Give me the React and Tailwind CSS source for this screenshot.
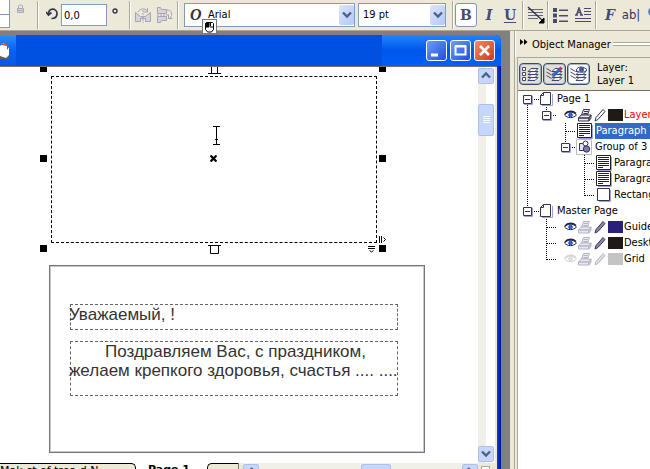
import React from "react";

const ui = "font-['DejaVu_Sans_Condensed','DejaVu_Sans',sans-serif] text-[11px] leading-4";

function Chevron({ dir = "down", className = "" }) {
  const d = { down: "M3 4.5l4 4 4-4", up: "M3 8.5l4-4 4 4", left: "M8.5 3l-4 4 4 4", right: "M5 3l4 4-4 4" }[dir];
  return (
    <svg viewBox="0 0 14 14" className={`h-[14px] w-[14px] ${className}`} fill="none" stroke="#4d6185" strokeWidth="2.4">
      <path d={d} />
    </svg>
  );
}

function Separator({ className = "" }) {
  return <div className={`h-7 w-[2px] shrink-0 border-l border-[#aca899] bg-white ${className}`} />;
}

function Dropdown({ label, value, className = "", textClass = "" }) {
  return (
    <div className={`relative h-6 shrink-0 ${className}`}>
      <select
        aria-label={label}
        defaultValue={value}
        className={`h-full w-full appearance-none border border-[#7f9db9] bg-white text-black outline-none ${textClass}`}
      >
        <option>{value}</option>
      </select>
      <span className="pointer-events-none absolute inset-y-[2px] right-px flex w-[15px] items-center justify-center rounded-[2px] bg-linear-to-br from-[#dbe5fd] to-[#b4c8f6]">
        <Chevron />
      </span>
    </div>
  );
}

function ToolButton({ label, className = "", children }) {
  return (
    <button aria-label={label} className={`flex h-6 shrink-0 items-center justify-center ${className}`}>
      {children}
    </button>
  );
}

const glyph = "font-['DejaVu_Serif',serif] text-[14px] font-bold text-[#4a4a78]";

function Toolbar() {
  return (
    <div className={`relative z-10 flex h-[31px] shrink-0 items-center border-b border-[#aca899] bg-[#ece9d8] ${ui}`}>
      <div className="-mt-[3px] flex w-[10px] shrink-0 flex-col">
        <input aria-label="Scale X" className="h-4 w-full border border-t-0 border-l-0 border-[#7f9db9] bg-white" />
        <input aria-label="Scale Y" className="h-[13px] w-full border border-t-0 border-l-0 border-[#7f9db9] bg-white" />
      </div>
      <ToolButton label="Lock ratio" className="ml-[6px] w-[9px] pb-3">
        <svg viewBox="0 0 9 10" className="h-[10px] w-[9px]" fill="none" stroke="#aaa9b8">
          <path d="M2.500 4V2l1-1h2l1 1v2" />
          <path d="M1.500 4.500h6v4h-6zM2 6.500h5" fill="#d4d3dc" />
        </svg>
      </ToolButton>
      <Separator className="ml-3" />
      <ToolButton label="Rotate" className="ml-[7px] w-3 pb-1">
        <svg viewBox="0 0 12 13" className="h-[13px] w-3" fill="none" stroke="#34344c" strokeWidth="1.7">
          <path d="M2.500 7.500C2 0 11 1 11 6.500c0 3-2 5-5.500 5" />
          <path d="M0 5l2.500 3L5.500 5.500" />
        </svg>
      </ToolButton>
      <input aria-label="Angle" defaultValue="0,0" className="ml-[3px] h-[22px] w-[46px] shrink-0 border border-[#7f9db9] bg-white px-[2px]" />
      <svg viewBox="0 0 6 6" className="mb-2 ml-[5px] h-[6px] w-[6px] shrink-0" fill="none" stroke="#34344c" strokeWidth="1.4">
        <circle cx="3" cy="3" r="2" />
      </svg>
      <Separator className="ml-[11px]" />
      <ToolButton label="Mirror horizontally" className="ml-1 w-4">
        <svg viewBox="0 0 16 16" className="h-4 w-4" fill="#d5d4dc" stroke="#a5a4b4">
          <path d="M.5 5.500v9h5v-3h2v-2h-2zM15.500 5.500v9h-5v-3h-2v-2h2z" />
          <path d="M8 3v13" strokeDasharray="2 1" />
          <path d="M3 5C5 1 10 1 12 4M12.500 1v4h-4" fill="none" />
        </svg>
      </ToolButton>
      <ToolButton label="Mirror vertically" className="ml-[6px] w-4">
        <svg viewBox="0 0 16 16" className="h-4 w-4" fill="#d5d4dc" stroke="#a5a4b4">
          <path d="M.5.500h3l1 2h5v4h-9zM.5 15.500h3l1-2h5v-4h-9z" />
          <path d="M0 8h12" strokeDasharray="2 1" />
          <path d="M10 3c5 0 6 5 3 8M15.500 11.500h-4v-4" fill="none" />
        </svg>
      </ToolButton>
      <Separator className="ml-1" />
      <div className="relative ml-[5px] shrink-0">
        <Dropdown label="Font" value="Arial" className="w-[171px]" textClass="pl-[23px]" />
        <span className="pointer-events-none absolute top-[3px] left-[6px] font-['Liberation_Serif',serif] text-[16px] leading-[18px] font-bold text-[#333] italic">O</span>
        <span className="absolute top-4 left-[18px] flex h-[15px] w-[15px] items-center justify-center border border-[#777] bg-white">
          <svg viewBox="0 0 11 12" className="h-3 w-[11px]" fill="none" stroke="#000">
            <path d="M1.500 2.500l1-1h6l1 1v6l-2 2.500h-4l-2-2.500z" />
            <path d="M2 2h3v4H2z" fill="#000" />
            <path d="M6 6h3M6.500 2v3" />
          </svg>
        </span>
      </div>
      <Dropdown label="Font size" value="19 pt" className="ml-[3px] w-[88px]" textClass="pl-1" />
      <Separator className="ml-[6px]" />
      <ToolButton label="Bold" className={`ml-px w-[22px] rounded-[3px] border border-[#8096b5] bg-white ${glyph}`}>
        B
      </ToolButton>
      <ToolButton label="Italic" className={`ml-[6px] w-3 italic ${glyph}`}>
        I
      </ToolButton>
      <ToolButton label="Underline" className={`ml-2 w-[14px] underline underline-offset-2 ${glyph}`}>
        U
      </ToolButton>
      <Separator className="ml-[5px]" />
      <ToolButton label="Alignment" className="ml-[3px] w-[18px]">
        <svg viewBox="0 0 18 18" className="h-[18px] w-[18px]" fill="none" stroke="#66667c">
          <path d="M1 3.500h15M1 6.500h15M1 9.500h15M1 12.500h10" />
          <path d="M1 1l14 13" stroke="#34344c" strokeWidth="1.500" />
          <path d="M17 12v5h-5z" fill="#000" stroke="#000" />
        </svg>
      </ToolButton>
      <Separator className="ml-[2px]" />
      <ToolButton label="Bullets" className="ml-1 w-4">
        <svg viewBox="0 0 16 15" className="h-[15px] w-4" fill="#4a4a70">
          <path d="M0 0h4v4H0zM0 5.500h4v4H0zM0 11h4v4H0zM6 1.500h9V3H6zM6 7h9v1.500H6zM6 12.500h9V14H6z" />
        </svg>
      </ToolButton>
      <ToolButton label="Drop cap" className="ml-[6px] w-4">
        <svg viewBox="0 0 16 16" className="h-4 w-4" fill="none" stroke="#4a4a70">
          <path d="M9 1.500h7M9 4.500h7M9 7.500h7M0 11.500h16M0 14.500h16" />
          <path d="M0 8h3M5 8h3M1.500 8L4 1l2.500 7M2.500 5.500h3" strokeWidth="1.500" />
        </svg>
      </ToolButton>
      <Separator className="ml-1" />
      <ToolButton label="Format text" className={`ml-[6px] w-[14px] italic ${glyph}`}>
        F
      </ToolButton>
      <ToolButton label="Edit text" className="ml-[6px] w-4 text-[13px] text-[#34345c]">
        ab|
      </ToolButton>
      <ToolButton label="Convert text" className="ml-[9px] w-4">
        <svg viewBox="0 0 16 16" className="h-4 w-4" fill="none" stroke="#5080c8" strokeWidth="1.800">
          <path d="M6 1C2 1 1 3 1 5s2 4 5 4" />
        </svg>
      </ToolButton>
    </div>
  );
}

function WindowButton({ label, className, children }) {
  return (
    <button aria-label={label} className={`flex h-[21px] w-[21px] items-center justify-center rounded-[3px] border border-white ${className}`}>
      <svg viewBox="0 0 19 19" className="h-[19px] w-[19px]" fill="none" stroke="#fff">
        {children}
      </svg>
    </button>
  );
}

function TitleBar() {
  return (
    <div className="flex h-[31px] shrink-0 items-stretch rounded-tr-[6px] bg-[#0050e2]">
      <div className="flex w-4 items-center bg-linear-to-b from-[#2c8cff] via-[#0a62f0] to-[#0758e6]">
        <svg viewBox="0 0 12 18" className="h-[18px] w-3">
          <path d="M0 3h4l5 3v11H0z" fill="#55606a" />
          <path d="M0 4l3-3 4 2v5l2-3v8l-3 3-6-2z" fill="#fff" />
          <path d="M1 1l6 1v2L1 3z" fill="#c65a34" />
        </svg>
      </div>
      <div className="flex-1" />
      <div className="flex w-[119px] items-center justify-end gap-[3px] rounded-tr-[6px] bg-linear-to-b from-[#2484ff] via-[#0056ea] to-[#0060fa] pr-[6px]">
        <WindowButton label="Minimize" className="bg-linear-to-br from-[#6f9bf5] to-[#1c51d8]">
          <path d="M4 14h7" strokeWidth="3" />
        </WindowButton>
        <WindowButton label="Maximize" className="bg-linear-to-br from-[#6f9bf5] to-[#1c51d8]">
          <path d="M4.500 5.500h10v8h-10zM4 5h11" strokeWidth="2" />
        </WindowButton>
        <WindowButton label="Close" className="bg-linear-to-br from-[#ee8a66] to-[#cb3a12]">
          <path d="M5 5l9 9M14 5l-9 9" strokeWidth="2.600" />
        </WindowButton>
      </div>
    </div>
  );
}

function Handle({ className }) {
  return <span className={`absolute h-[7px] w-[7px] bg-black ${className}`} />;
}

/* Paragraph frame with its selection handles, text flow tabs and resize grips. */
function SelectedFrame() {
  return (
    <div className="absolute top-[9px] left-[51px] h-[167px] w-[326px] border border-dashed border-black">
      <Handle className="-top-[12px] -left-[12px]" />
      <Handle className="-top-[12px] -right-[10px]" />
      <Handle className="top-[78px] -left-[12px]" />
      <Handle className="top-[78px] -right-[10px]" />
      <Handle className="-bottom-[10px] -left-[12px]" />
      <Handle className="-right-[10px] -bottom-[10px]" />
      <svg viewBox="0 0 13 9" className="absolute -top-[11px] left-[156px] h-[9px] w-[13px]" fill="none" stroke="#000">
        <path d="M3.500 0v8M9.500 0v8M0 7.500h13" />
      </svg>
      <svg viewBox="0 0 13 9" className="absolute -bottom-[12px] left-[156px] h-[9px] w-[13px]" fill="none" stroke="#000">
        <path d="M0 .500h13M2.500 1v7.500h8V1" />
      </svg>
      <svg viewBox="0 0 7 19" className="absolute top-[49px] left-[161px] h-[19px] w-[7px]" fill="none" stroke="#000">
        <path d="M0 .500h7M3.500 0v19M0 18.500h7M2 13.500h3" />
      </svg>
      <svg viewBox="0 0 7 7" className="absolute top-[78px] left-[158px] h-[7px] w-[7px]" fill="none" stroke="#000" strokeWidth="2.200">
        <path d="M.5.500l6 6M6.500.500l-6 6" />
      </svg>
      <svg viewBox="0 0 7 7" className="absolute right-[-10px] bottom-[-1px] h-[7px] w-[7px]" fill="none" stroke="#000">
        <path d="M.5 0v7M2.500 0v7M4.500 1.500l2 2-2 2" />
      </svg>
      <svg viewBox="0 0 7 7" className="absolute right-px -bottom-[11px] h-[7px] w-[7px]" fill="none" stroke="#000">
        <path d="M0 .500h7M0 2.500h7M1.500 4.500l2 1.500 2-1.500" />
      </svg>
    </div>
  );
}

function Canvas() {
  const frame = "absolute left-5 w-[328px] border border-dashed border-[#666] whitespace-nowrap";
  return (
    <div className="relative min-w-0 flex-1 overflow-hidden bg-white font-['Liberation_Sans',Arial,sans-serif] text-[17px] leading-[19px] text-[#333]">
      <SelectedFrame />
      <div className="absolute top-[198px] left-[49px] h-[188px] w-[376px] border border-[#777] shadow-[inset_0_0_0_1px_#c8c8c8]">
        <p className={`${frame} top-[38px] h-[26px]`}>
          <span className="-ml-[2px] block">Уважаемый, !</span>
        </p>
        <p className={`${frame} top-[75px] h-[55px]`}>
          <span className="-ml-[2px] block pl-9">Поздравляем Вас, с праздником,</span>
          <span className="-ml-[2px] block">желаем крепкого здоровья, счастья .... ....</span>
        </p>
      </div>
    </div>
  );
}

const scrollButton = "flex shrink-0 items-center justify-center rounded-[2px] border border-[#aebfe8] bg-[#c6d6fc]";

function VerticalScrollbar() {
  return (
    <div className="flex w-[19px] shrink-0 flex-col border-r-2 border-[#ece9d8] bg-linear-to-r from-[#f1f0e8] from-45% to-white to-50% pt-px pb-px">
      <button aria-label="Scroll up" className={`h-4 w-4 ${scrollButton}`}>
        <Chevron dir="up" />
      </button>
      <div className="flex-1 pt-[20px]">
        <div className={`h-8 w-4 ${scrollButton}`}>
          <svg viewBox="0 0 7 8" className="h-2 w-[7px]" stroke="#f4f8ff">
            <path d="M0 .500h7M0 2.500h7M0 4.500h7M0 6.500h7" />
          </svg>
        </div>
      </div>
      <button aria-label="Scroll down" className={`h-4 w-4 ${scrollButton}`}>
        <Chevron />
      </button>
    </div>
  );
}

function PageBar() {
  return (
    <div className="flex h-[6px] shrink-0 items-start overflow-hidden bg-white font-['DejaVu_Sans',sans-serif] text-[11px] leading-3">
      <button className="h-[14px] w-[136px] shrink-0 overflow-hidden rounded-tr-[5px] border-t border-r border-black bg-[#ece9d8] text-left whitespace-nowrap">Mak ct of trea d N</button>
      <button className="ml-3 h-[14px] w-[43px] shrink-0 text-left font-bold whitespace-nowrap">Page 1</button>
      <button aria-label="Add page" className="ml-4 h-[14px] w-[31px] shrink-0 rounded-tl-[5px] border-t border-l border-black bg-[#ece9d8]" />
      <div className="h-[14px] w-[5px] shrink-0 border-l border-[#777] bg-[#ece9d8]" />
      <div className="flex h-5 flex-1 items-start bg-[#f1f0e8] pt-px">
        <button aria-label="Scroll left" className={`h-4 w-4 ${scrollButton}`}>
          <Chevron dir="left" />
        </button>
        <div className="flex flex-1 justify-end pr-[71px]">
          <div className={`h-4 w-[30px] ${scrollButton}`} />
        </div>
        <button aria-label="Scroll right" className={`h-4 w-4 ${scrollButton}`}>
          <Chevron dir="right" />
        </button>
      </div>
      <div className="h-5 w-[19px] shrink-0 bg-[#ece9d8] p-[3px]">
        <div className="h-3 w-[9px] border border-[#aca899] bg-white" />
      </div>
    </div>
  );
}

function DocumentWindow() {
  return (
    <div className="flex min-w-0 flex-1 flex-col bg-[#808080] pt-1 pr-[9px]">
      <div className="flex min-h-0 flex-1 flex-col rounded-tr-[6px] bg-linear-to-l from-[#0010a0] to-[#0040e0] to-[4px] pr-1">
        <div className="-mr-1 flex flex-col">
          <TitleBar />
        </div>
        <div className="flex min-h-0 flex-1 flex-col border-t border-[#716f64]">
          <div className="flex min-h-0 flex-1">
            <Canvas />
            <VerticalScrollbar />
          </div>
          <PageBar />
        </div>
      </div>
    </div>
  );
}

/* One 19px column of the tree: v = line through, t = branch, l = last branch, e/E/M = expander, _ = empty. */
function Guide({ kind }) {
  const paths = {
    v: "M9.500 0v16",
    t: "M9.500 0v16M10 8.500h9",
    l: "M9.500 0v9M10 8.500h9",
    _: "",
    e: "M14 8.500h8M9.500 12v4",
    E: "M14 8.500h5M9.500 0v4",
    M: "M14 8.500h8M9.500 0v4",
  };
  return (
    <svg viewBox="0 0 19 16" className="h-4 w-[19px] shrink-0 overflow-visible" fill="none">
      <path d={paths[kind]} stroke="#000" strokeDasharray="1 1" />
      {"eEM".includes(kind) && (
        <>
          <path d="M6 13.500h8.500V5" stroke="#a0a0d8" />
          <path d="M5.500 4.500h8v8h-8z" fill="#fff" stroke="#34344c" />
          <path d="M7 8.500h5" stroke="#34344c" />
        </>
      )}
    </svg>
  );
}

function PageIcon() {
  return (
    <svg viewBox="0 0 13 14" className="mr-1 ml-[3px] h-[14px] w-[13px] shrink-0" fill="none">
      <path d="M2 13.500h10.500V2" stroke="#a0a0d8" />
      <path d="M3.500.500h7v12H.500v-9z" fill="#fff" stroke="#34344c" />
      <path d="M3.500.500v3h-3" stroke="#34344c" />
    </svg>
  );
}

function ParagraphIcon() {
  return (
    <svg viewBox="0 0 16 16" className="mr-[2px] ml-[2px] h-4 w-4 shrink-0" fill="none">
      <path d="M2 15.500h13.500V2" stroke="#a0a0d8" />
      <path d="M.5.500h14v14h-14z" fill="#fff" stroke="#222" />
      <path d="M2 2.500h11M2 4.500h11M2 6.500h11M2 8.500h11M2 10.500h11M2 12.500h5" stroke="#222" />
    </svg>
  );
}

function GroupIcon() {
  return (
    <svg viewBox="0 0 16 16" className="mr-[2px] ml-px h-4 w-4 shrink-0" fill="none">
      <path d="M.5.500h15v15H.500z" fill="#fff" stroke="#bbb" />
      <path d="M3.500 4.500h5v7h-5z" fill="#e4e4f2" stroke="#34344c" />
      <circle cx="9.500" cy="4.500" r="2.500" fill="#fff" stroke="#34344c" />
      <circle cx="10.500" cy="10" r="3.200" fill="#7878b0" stroke="#34345c" />
    </svg>
  );
}

function RectIcon() {
  return (
    <svg viewBox="0 0 16 16" className="mr-[2px] ml-[2px] h-4 w-4 shrink-0" fill="none">
      <path d="M3 14.500h11.500V3" stroke="#a0a0d8" />
      <path d="M1.500 1.500h12v12h-12z" fill="#fff" stroke="#34344c" />
    </svg>
  );
}

function LayerIcons({ swatch, visible = true, printable = false, editable = true }) {
  const eye = visible ? "#222244" : "#d4d4d4";
  const printer = printable ? "#34344c" : "#b4b4c4";
  const pen = editable ? "#34344c" : "#b4b4c4";
  return (
    <>
      <svg viewBox="0 0 13 10" className="ml-2 h-[10px] w-[13px] shrink-0" fill="none" stroke={eye}>
        <path d="M.5 5C3 1.500 9 1 12.500 5 9 8.500 3.500 8.500.500 5z" fill="#fff" />
        <path d="M1 4C3.500.500 9 .500 12 3.500" strokeWidth="1.400" />
        <circle cx="6.500" cy="5" r="1.800" fill={visible ? "#2868e8" : "#e4e4e4"} stroke={visible ? "#1848c8" : "#d4d4d4"} />
      </svg>
      <svg viewBox="0 0 14 13" className="ml-px h-[13px] w-[14px] shrink-0" fill="#e8e8f0" stroke={printer}>
        <path d="M3.500 6l2-5.500h6l-2 5.500z" />
        <path d="M6 2.500h4M5.500 4.500h4" />
        <path d="M.5 9l2.500-3h10l-2 3zM.5 9h10.500v3H.500zM11 9l2-3v3l-2 3z" />
      </svg>
      <svg viewBox="0 0 12 13" className="ml-[2px] h-[13px] w-3 shrink-0" fill={printable ? "#fff" : editable ? "#8888a8" : "#dcdce4"} stroke={pen}>
        <path d="M1 12l1-3.500 7-8 2 2-7 8z" />
      </svg>
      <span className={`ml-[2px] h-3 w-[15px] shrink-0 ${swatch}`} />
    </>
  );
}

const rows = [
  { guides: "e", icon: <PageIcon />, label: "Page 1" },
  { guides: "vE", icon: <LayerIcons printable swatch="bg-[#1f1a17]" />, label: "Layer 1", tone: "ml-px text-[#f00000]" },
  { guides: "v_t", icon: <ParagraphIcon />, label: "Paragraph Text", tone: "flex-1 bg-[#316ac5] pl-px text-white" },
  { guides: "v_E", icon: <GroupIcon />, label: "Group of 3 Objects", tone: "pl-px" },
  { guides: "v__t", icon: <ParagraphIcon />, label: "Paragraph Text" },
  { guides: "v__t", icon: <ParagraphIcon />, label: "Paragraph Text" },
  { guides: "v__l", icon: <RectIcon />, label: "Rectangle" },
  { guides: "M", icon: <PageIcon />, label: "Master Page" },
  { guides: "_t", icon: <LayerIcons swatch="bg-[#28207a]" />, label: "Guides", tone: "ml-px" },
  { guides: "_t", icon: <LayerIcons swatch="bg-[#1f1a17]" />, label: "Desktop", tone: "ml-px" },
  { guides: "_l", icon: <LayerIcons visible={false} editable={false} swatch="bg-[#c4c4c4]" />, label: "Grid", tone: "ml-px" },
];

function LayersButton({ label, children, pressed }) {
  return (
    <button
      aria-label={label}
      className={`flex h-[22px] w-[23px] items-center justify-center rounded-[4px] border border-[#2b5078] shadow-[inset_0_0_0_1px_#a8b4c4] ${pressed ? "bg-white" : "bg-[#e4e0d0]"}`}
    >
      <svg viewBox="0 0 19 18" className="h-[18px] w-[19px]" fill="#eeeef6" stroke="#44446c">
        <path d="M7 15.500l3-3h7l-3 3zM7 12.500l3-3h7l-3 3zM7 9.500l3-3h7l-3 3zM7 6.500l3-3h7l-3 3z" />
        {children}
      </svg>
    </button>
  );
}

function ObjectManager() {
  return (
    <aside className={`flex w-[140px] shrink-0 flex-col border-l-4 border-[#ece9d8] bg-[#ece9d8] ${ui}`}>
      <div className="flex min-h-0 flex-1 flex-col border-l border-[#aca899]">
        <header className="flex h-[26px] shrink-0 items-center border-l border-white pl-1">
          <svg viewBox="0 0 8 6" className="mb-1 h-[6px] w-2 shrink-0">
            <path d="M0 0l3.500 3L0 6zM4 0l3.500 3L4 6z" />
          </svg>
          <h2 className="ml-1 shrink-0 pt-[2px]">Object Manager</h2>
          <span className="ml-[2px] h-[4px] flex-1 border-y border-[#aca899] bg-white" />
        </header>
        <div className="ml-[2px] flex min-h-0 flex-1 flex-col border-t border-l border-[#aca899]">
          <div className="flex h-8 shrink-0 items-center gap-px pl-px">
            <LayersButton label="Show object properties">
              <path d="M1.500 2.500h3v3h-3zM1.500 7.500h3v3h-3zM1.500 12.500h3v3h-3z" fill="#fff" />
            </LayersButton>
            <LayersButton label="Edit across layers">
              <path d="M1.500 3.500l5 3M1.500 7l5 3M1.500 10.500l5 3" />
              <path d="M8 11L15 4" stroke="#2868c8" strokeWidth="3" />
              <path d="M14.500 4.500l2-2" stroke="#c03050" strokeWidth="3" />
            </LayersButton>
            <LayersButton label="Layer manager view" pressed>
              <path d="M1.500 3.500l5 3M1.500 7l5 3M1.500 10.500l5 3" />
              <path d="M7 5c2-4 8-4 11 0-3 3-8 3-11 0z" fill="#fff" />
              <circle cx="12.500" cy="4.500" r="2" fill="#2868c8" />
            </LayersButton>
            <div className="ml-[6px] leading-[13px]">
              <div>Layer:</div>
              <div className="whitespace-nowrap">Layer 1</div>
            </div>
          </div>
          <ul className="min-h-0 flex-1 overflow-hidden border-t border-[#716f64] bg-white">
            {rows.map((row, i) => (
              <li key={i} className="flex h-4 items-center">
                {[...row.guides].map((kind, j) => (
                  <Guide key={j} kind={kind} />
                ))}
                {row.icon}
                <span className={`whitespace-nowrap ${row.tone || ""}`}>{row.label}</span>
              </li>
            ))}
          </ul>
        </div>
      </div>
    </aside>
  );
}

export default function App() {
  return (
    <div className="flex h-screen flex-col overflow-hidden bg-[#ece9d8] text-black">
      <Toolbar />
      <main className="flex min-h-0 flex-1">
        <DocumentWindow />
        <ObjectManager />
      </main>
    </div>
  );
}
